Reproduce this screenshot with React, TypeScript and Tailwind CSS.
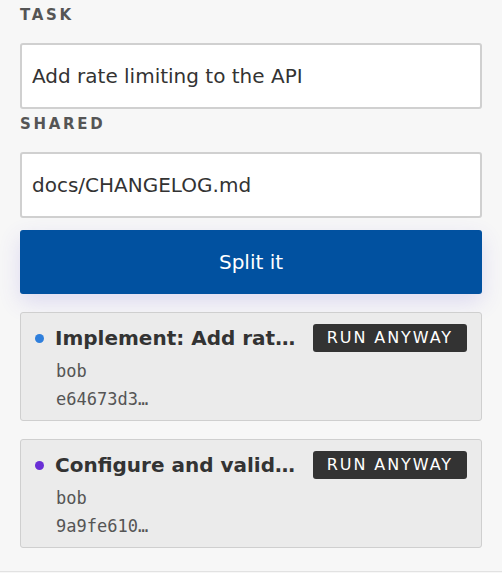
import React from "react";

type Job = {
  title: string;
  dot: string;
  owner: string;
  sha: string;
};

const jobs: Job[] = [
  { title: "Implement: Add rate limiting to the API", dot: "bg-[#2f7fdc]", owner: "bob", sha: "e64673d3…" },
  { title: "Configure and validate rate limits", dot: "bg-[#6a2fd6]", owner: "bob", sha: "9a9fe610…" },
];

function Label({ children }: { children: React.ReactNode }) {
  return (
    <div className="pt-[5px] pb-[18px] text-[15px] leading-5 font-bold tracking-[0.18em] text-[#555]">
      {children}
    </div>
  );
}

function Field({ value }: { value: string }) {
  return (
    <input
      readOnly
      value={value}
      className="block h-[66px] w-full rounded-[3px] border-2 border-[#d0d0d0] bg-white px-[10px] text-[20px] text-[#333] outline-none"
    />
  );
}

function JobCard({ job }: { job: Job }) {
  return (
    <div className="rounded-[3px] border border-[#cfcfcf] bg-[#ebebeb] px-[14px] pt-[11px] pb-[7px]">
      <div className="flex h-7 items-center gap-[14px]">
        <span className={`-mr-[3px] h-[9px] w-[9px] shrink-0 rounded-full ${job.dot}`} />
        <div className="min-w-0 flex-1 truncate text-[20px] font-bold text-[#333]">{job.title}</div>
        <button className="h-7 shrink-0 rounded-[3px] bg-[#333] px-[14px] text-[16px] tracking-[0.12em] text-white">
          RUN ANYWAY
        </button>
      </div>
      <div className="mt-[5px] pl-[21px] font-['DejaVu_Sans_Mono',monospace] text-[17px] leading-7 text-[#555]">
        <div>{job.owner}</div>
        <div>{job.sha}</div>
      </div>
    </div>
  );
}

export default function App() {
  return (
    <div className="min-h-[573px] bg-[#f7f7f7] font-['DejaVu_Sans',sans-serif]">
      <div className="border-b border-[#e2e2e2] px-[20px] pb-[23px]">
        <Label>TASK</Label>
        <Field value="Add rate limiting to the API" />
        <Label>SHARED</Label>
        <Field value="docs/CHANGELOG.md" />

        <button className="mt-[12px] h-16 w-full rounded-[3px] bg-[#0151a0] text-[20px] text-white shadow-[0_8px_22px_rgba(90,70,210,0.16)]">
          Split it
        </button>

        <div className="mt-[18px] flex flex-col gap-[18px]">
          {jobs.map((job) => (
            <JobCard key={job.sha} job={job} />
          ))}
        </div>
      </div>
    </div>
  );
}
